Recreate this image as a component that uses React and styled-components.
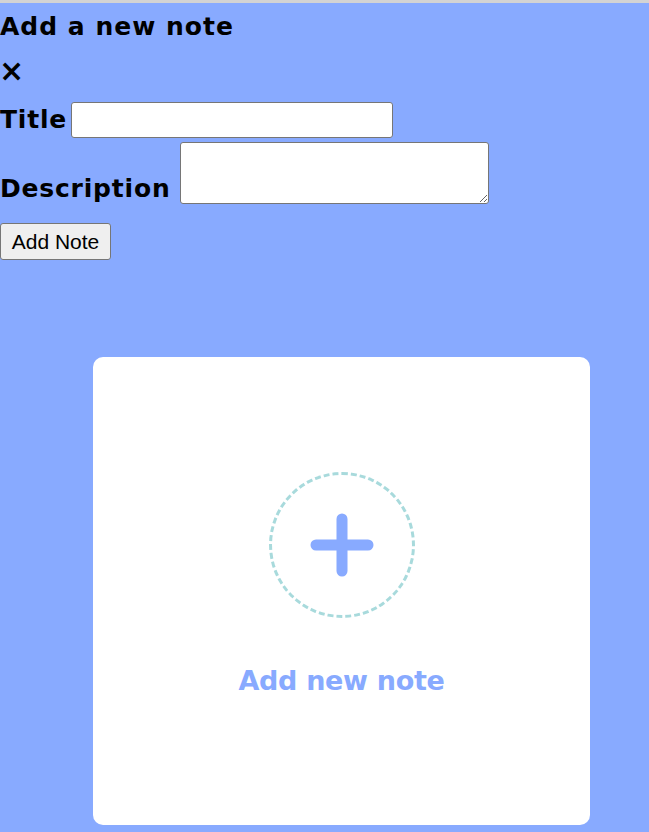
import React from "react"
import styled, { createGlobalStyle } from "styled-components"

const GlobalStyle = createGlobalStyle`
  html, body {
    margin: 0;
    padding: 0;
  }
  body {
    background: #88aaff;
    border-top: 3px solid #d3d3d3;
    font-family: "DejaVu Sans", "Noto Sans", sans-serif;
    min-height: 829px;
  }
`

const Page = styled.div`
  display: flex;
  flex-direction: column;
`

const Form = styled.form`
  display: flex;
  flex-direction: column;
  align-items: flex-start;
`

const Heading = styled.h2`
  margin: 6px 0 0;
  font-size: 25px;
  font-weight: 700;
  line-height: 36px;
  color: #000;
  letter-spacing: 1px;
`

const Close = styled.span`
  font-size: 30px;
  font-weight: 700;
  line-height: 30px;
  margin-top: 11px;
  margin-left: -1px;
`

const Row = styled.div`
  display: flex;
  align-items: flex-end;
  gap: ${(p) => p.$gap}px;
  margin-top: ${(p) => p.$top || 0}px;
`

const Label = styled.label`
  font-size: 25px;
  font-weight: 700;
  line-height: 30px;
  padding-bottom: ${(p) => p.$pad || 0}px;
  letter-spacing: 0.8px;
`

const Input = styled.input`
  box-sizing: border-box;
  width: 322px;
  height: 36px;
  border: 1px solid #767676;
  border-radius: 3px;
  background: #fff;
`

const TextArea = styled.textarea`
  box-sizing: border-box;
  width: 309px;
  height: 62px;
  border: 1px solid #767676;
  border-radius: 3px;
  background: #fff;
  display: block;
`

const Button = styled.button`
  margin-top: 19px;
  box-sizing: border-box;
  height: 37px;
  width: 111px;
  padding: 0 3px;
  font-family: "Liberation Sans", Arial, sans-serif;
  font-size: 21px;
  color: #000;
  background: #efefef;
  border: 1px solid #767676;
  border-radius: 3px;
`

const Card = styled.div`
  box-sizing: border-box;
  margin: 97px 0 0 93px;
  width: 497px;
  height: 468px;
  background: #fff;
  border-radius: 10px;
  display: flex;
  flex-direction: column;
  align-items: center;
  padding-top: 115px;
`

const Circle = styled.div`
  box-sizing: border-box;
  width: 146px;
  height: 146px;
  border-radius: 50%;
  border: 3px dashed #a8dadc;
  display: flex;
  align-items: center;
  justify-content: center;
`

const CardText = styled.p`
  margin: 46px 0 0;
  font-size: 27px;
  font-weight: 700;
  color: #88aaff;
  line-height: 34px;
  letter-spacing: -0.3px;
`

export default function App() {
  return (
    <Page>
      <GlobalStyle />
      <Form>
        <Heading>Add a new note</Heading>
        <Close>×</Close>
        <Row $top={16} $gap={4}>
          <Label $pad={3}>Title</Label>
          <Input type="text" />
        </Row>
        <Row $top={4} $gap={9}>
          <Label $pad={0}>Description</Label>
          <TextArea />
        </Row>
        <Button type="button">Add Note</Button>
      </Form>
      <Card>
        <Circle>
          <svg width="64" height="64" viewBox="0 0 64 64">
            <path d="M32 6v52M6 32h52" stroke="#88aaff" strokeWidth="11" strokeLinecap="round" />
          </svg>
        </Circle>
        <CardText>Add new note</CardText>
      </Card>
    </Page>
  )
}
